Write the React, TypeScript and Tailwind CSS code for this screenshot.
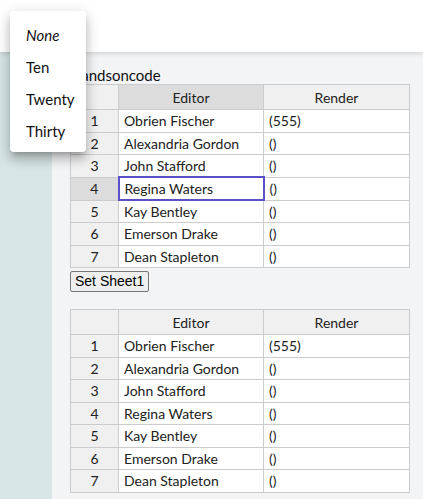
const rows = [
  ["Obrien Fischer", "(555)"],
  ["Alexandria Gordon", "()"],
  ["John Stafford", "()"],
  ["Regina Waters", "()"],
  ["Kay Bentley", "()"],
  ["Emerson Drake", "()"],
  ["Dean Stapleton", "()"],
];

function Grid({ selected }: { selected?: number }) {
  return (
    <table className="border-collapse w-[340px] text-[14px] text-[#222] table-fixed">
      <colgroup>
        <col className="w-[48px]" />
        <col className="w-[145px]" />
        <col />
      </colgroup>
      <thead>
        <tr className="h-[25px]">
          <th className="border border-[#ccc] bg-[#f0f0f0] font-normal" />
          <th
            className={
              "border border-[#ccc] font-normal " +
              (selected ? "bg-[#dcdcdc]" : "bg-[#f0f0f0]")
            }
          >
            Editor
          </th>
          <th className="border border-[#ccc] bg-[#f0f0f0] font-normal">Render</th>
        </tr>
      </thead>
      <tbody>
        {rows.map(([name, val], i) => (
          <tr key={i} className="h-[22.5px]">
            <td
              className={
                "border border-[#ccc] text-center " +
                (selected === i + 1 ? "bg-[#dcdcdc]" : "bg-[#f0f0f0]")
              }
            >
              {i + 1}
            </td>
            <td
              className={
                "bg-white px-[5px] whitespace-nowrap overflow-hidden " +
                (selected === i + 1
                  ? "border-2 border-[#5b50c8]"
                  : "border border-[#ccc]")
              }
            >
              {name}
            </td>
            <td className="border border-[#ccc] bg-white px-[5px]">{val}</td>
          </tr>
        ))}
      </tbody>
    </table>
  );
}

export default function App() {
  return (
    <div className="relative w-[423px] h-[499px] overflow-hidden bg-white font-['Lato',sans-serif]">
      <div className="h-[52px] bg-white shadow-[0_2px_4px_rgba(0,0,0,0.12)] relative z-10" />
      <div className="flex h-[447px]">
        <div className="w-[52px] bg-[#d7e5e6]" />
        <div className="flex-1 bg-[#f3f4f6] pl-[18px] pt-[14px]">
          <div className="text-[15px] leading-[18px] text-[#111]">Handsoncode</div>
          <Grid selected={4} />
          <button className="mt-[1px] h-[21px] px-[4px] border border-[#767676] rounded-[2px] bg-[#efefef] text-[14px] leading-[17px] text-black font-['Liberation_Sans',sans-serif]">
            Set Sheet1
          </button>
          <div className="mt-[17px]">
            <Grid />
          </div>
        </div>
      </div>

      <div className="absolute left-[10px] top-[11px] w-[76px] h-[141px] bg-white rounded-[4px] shadow-[0_5px_5px_-3px_rgba(0,0,0,0.2),0_8px_10px_1px_rgba(0,0,0,0.14),0_3px_14px_2px_rgba(0,0,0,0.12)] z-20 py-[8px] text-[15px] text-[#111]">
        <div className="h-[32px] flex items-center pl-[16px] italic">None</div>
        <div className="h-[32px] flex items-center pl-[16px]">Ten</div>
        <div className="h-[32px] flex items-center pl-[16px]">Twenty</div>
        <div className="h-[32px] flex items-center pl-[16px]">Thirty</div>
      </div>
    </div>
  );
}
